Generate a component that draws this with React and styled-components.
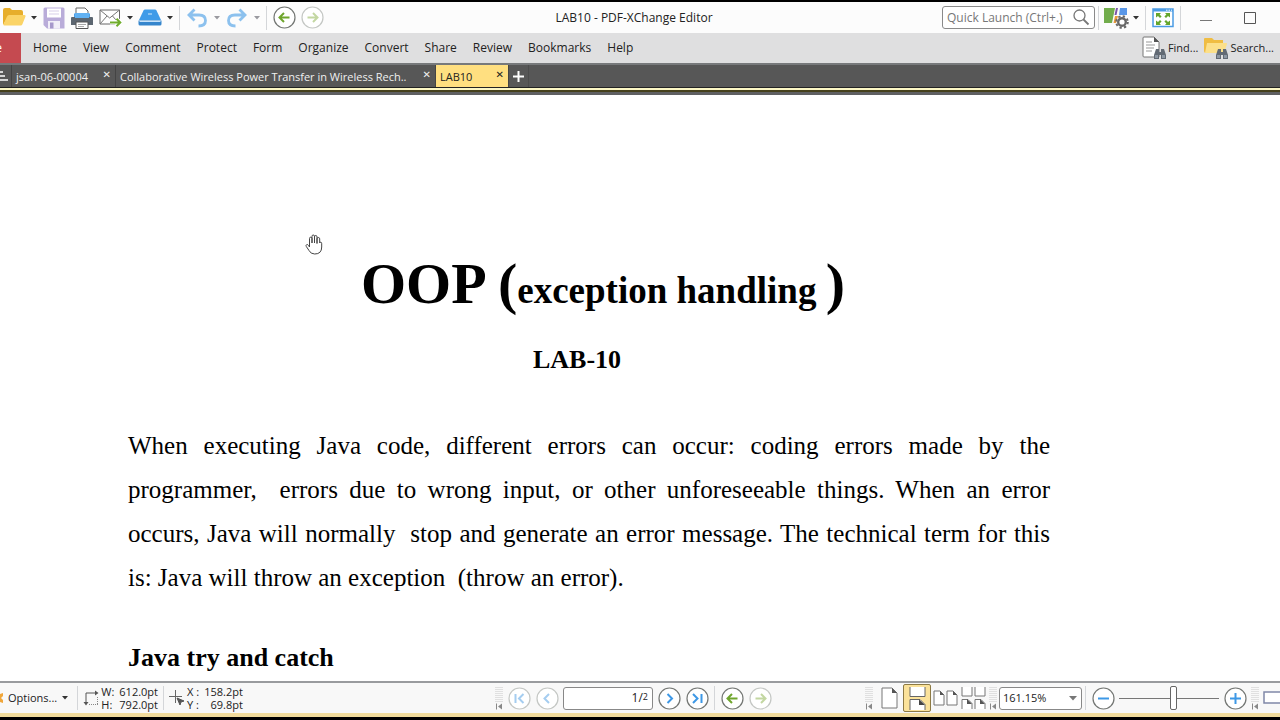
import React from 'react';
import styled, { createGlobalStyle } from 'styled-components';

const menuItems = [
  'Home',
  'View',
  'Comment',
  'Protect',
  'Form',
  'Organize',
  'Convert',
  'Share',
  'Review',
  'Bookmarks',
  'Help',
];

function Caret({ dim }) {
  return (
    <svg width="6" height="4" viewBox="0 0 6 4" aria-hidden="true">
      <path d="M0 0h6L3 3.5z" fill={dim ? '#9a9aa0' : '#333'} />
    </svg>
  );
}

function FolderIcon() {
  return (
    <svg width="24" height="22" viewBox="0 0 24 22">
      <path d="M1 3q0-2 2-2h5l2 2h9q2 0 2 2v5H6L1 18z" fill="#e7ae2b" />
      <path d="M7 8h15.500q1.500 0 1 1.500L20.500 17q-.5 1.500-2 1.500H2.500Q1 18.500 1.600 17L5 9.500Q5.600 8 7 8z" fill="#fbd467" />
    </svg>
  );
}

function SaveIcon() {
  return (
    <svg width="22" height="22" viewBox="0 0 22 22">
      <path d="M.5 2Q.5.5 2 .5h18q1.500 0 1.500 1.500v19.500H4L.5 18z" fill="#b9acd9" />
      <path d="M4 1.500h14v9H4z" fill="#fff" />
      <path d="M6 4h10M6 7h10" stroke="#d7cfe9" />
      <path d="M5 14h12v7.500H5z" fill="#f1eef8" />
      <path d="M7 15.500h3.500v6H7z" fill="#a698cb" />
    </svg>
  );
}

function PrintIcon() {
  return (
    <svg width="22" height="22" viewBox="0 0 22 22">
      <path d="M5 1h9l3 3v6H5z" fill="#fff" stroke="#666" />
      <path d="M3 6.500h16v5H3z" fill="#4b9fe6" />
      <path d="M1 10h20q1 0 1 1v7H0v-7q0-1 1-1z" fill="#5c6670" />
      <path d="M4 6h14v5H4z" fill="#61b1f2" />
      <path d="M5 15h12v6.500H5z" fill="#fff" stroke="#555" />
      <path d="M7 17.500h8M7 19.500h6" stroke="#aaa" />
    </svg>
  );
}

function MailIcon() {
  return (
    <svg width="23" height="20" viewBox="0 0 23 20">
      <path d="M1 2h19.500v14H1z" fill="#fff" stroke="#666" />
      <path d="M1 2l9.700 8L20.500 2M1 16l7-8M20.500 16l-7-8" fill="none" stroke="#777" />
      <path d="M11 14.500h10M17.500 10.800l3.800 3.700-3.800 3.700" fill="none" stroke="#fff" strokeWidth="4" />
      <path d="M11 14.500h10M17.500 10.800l3.800 3.700-3.800 3.700" fill="none" stroke="#70ad2b" strokeWidth="2" />
    </svg>
  );
}

function ScanIcon() {
  return (
    <svg width="24" height="18" viewBox="0 0 24 18">
      <path d="M5.500 1.500Q6 .5 7 .5h10q1 0 1.500 1L23 11H1z" fill="#3f9be8" />
      <path d="M.5 11.500h23V15q0 1.500-1.500 1.500H2Q.5 16.500.5 15z" fill="#3585cc" />
      <path d="M1.500 12.500h21" stroke="#c6e2fa" />
      <path d="M10 5h4" stroke="#d5eafb" />
    </svg>
  );
}

function UndoIcon({ flip }) {
  return (
    <svg width="20" height="20" viewBox="0 0 20 20">
      <path
        d="M7.500 1.500L2 7l5.500 5.500M2.500 7H12q6.500 0 6.500 5.500T11.500 18"
        fill="none"
        stroke="#8cc1ee"
        strokeWidth="2.800"
        transform={flip ? 'matrix(-1 0 0 1 20 0)' : undefined}
      />
    </svg>
  );
}

// round buttons used in the title bar and in the page navigation
const circleGlyphs = {
  back: 'M16.500 11.500H7M11 7l-4.500 4.500L11 16',
  forward: 'M6.500 11.500H16M12 7l4.500 4.500L12 16',
  first: 'M7.500 7v9M15.500 7L11 11.500l4.500 4.500',
  prev: 'M13 7l-4.500 4.500L13 16',
  next: 'M9.500 7l4.500 4.500L9.500 16',
  last: 'M7 7l4.500 4.500L7 16M15.500 7v9',
  minus: 'M6 11.500h11',
  plus: 'M6 11.500h11M11.500 6v11',
};

function CircleIcon({ glyph, color, dim }) {
  return (
    <svg width="23" height="23" viewBox="0 0 23 23">
      <circle cx="11.500" cy="11.500" r="10.500" fill="#fff" stroke={dim ? '#c4c7c4' : '#747774'} strokeWidth="1.200" />
      <path d={circleGlyphs[glyph]} fill="none" stroke={color} strokeWidth="2" />
    </svg>
  );
}

function ThemeIcon() {
  return (
    <svg width="25" height="22" viewBox="0 0 25 22">
      <path d="M0 1h11L8 16H0z" fill="#72ad4c" />
      <path d="M12 1h2l-1.500 7h-2z" fill="#7a55a8" />
      <path d="M16 1h7v7h-8z" fill="#5997e8" />
      <path d="M11 9h3l-2 7H9.500z" fill="#e99a3c" />
      <circle cx="18" cy="15" r="5.800" fill="none" stroke="#686868" strokeWidth="2" strokeDasharray="2.300 2.260" />
      <circle cx="18" cy="15" r="3.800" fill="#fff" stroke="#686868" strokeWidth="2.400" />
    </svg>
  );
}

function FullScreenIcon() {
  return (
    <svg width="22" height="20" viewBox="0 0 22 20">
      <path d="M1 1h20v17.500H1z" fill="#fff" stroke="#4a9be4" strokeWidth="1.500" />
      <path d="M1 1h20v2.500H1z" fill="#4a9be4" />
      <path d="M14 2.200h1.500M16.500 2.200H18M19 2.200h1" stroke="#fff" />
      <g fill="#65a62c">
        <path d="M4 5h5L7.600 6.400l2 2-1.600 1.600-2-2L4 9.500z" />
        <path d="M18 5h-5l1.400 1.400-2 2L14 10l2-2 2 1.500z" />
        <path d="M4 17h5l-1.400-1.400 2-2L8 12l-2 2-2-1.500z" />
        <path d="M18 17h-5l1.400-1.400-2-2L14 12l2 2 2-1.500z" />
      </g>
    </svg>
  );
}

function Binoculars() {
  return (
    <g fill="#626a74">
      <path d="M14 13h3v3h2v-3h3l2 6v4h-5v-4h-2v4h-5v-4z" />
      <path d="M13 19h3v3h-3zM20 19h3v3h-3z" fill="#8d97a3" />
    </g>
  );
}

function FindIcon() {
  return (
    <svg width="25" height="24" viewBox="0 0 25 24">
      <path d="M1 2q0-1 1-1h10l5 5v15H2q-1 0-1-1z" fill="#fff" stroke="#777" />
      <path d="M12 1v5h5z" fill="#555" />
      <path d="M4 6h6M4 9h9M4 12h8M4 15h6" stroke="#999" />
      <Binoculars />
    </svg>
  );
}

function SearchFolderIcon() {
  return (
    <svg width="25" height="24" viewBox="0 0 25 24">
      <path d="M0 3q0-1 1-1h7l2 2h9v13H2q-2 0-2-2z" fill="#f0bd42" />
      <path d="M3 7h19q1.500 0 1 1l-3 9H1z" fill="#fce08a" />
      <Binoculars />
    </svg>
  );
}

function HandCursor() {
  return (
    <svg width="18" height="21" viewBox="0 0 18 21">
      <path
        d="M4.500 11V4.500q0-1.300 1.200-1.300T7 4.500V9 2.300Q7 1 8.200 1t1.300 1.300V9 2.800q0-1.300 1.200-1.300T12 2.800V9.500 4.800q0-1.300 1.300-1.300t1.400 1.300V9q.3-1 1.200-.8t.8 1.500V13q0 7-7 7-4 0-5.700-3.500L1.300 12.500Q.6 11 1.700 10.600t1.800.9L4.500 13z"
        fill="#fff"
        stroke="#444"
        strokeLinejoin="round"
      />
    </svg>
  );
}

function SizeIcon() {
  return (
    <svg width="16" height="17" viewBox="0 0 16 17">
      <path d="M3 13V3h10" fill="none" stroke="#555" />
      <path d="M12 .5L15.500 3 12 5.500zM.5 12L3 15.500 5.500 12z" fill="#555" />
      <path d="M6 14.500h9M14.500 7v8" stroke="#888" strokeDasharray="1 1" />
    </svg>
  );
}

function PointerIcon() {
  return (
    <svg width="16" height="16" viewBox="0 0 16 16">
      <path d="M6.500 0v13M0 6.500h13" stroke="#666" />
      <path d="M8 8l7 3-3 1-1 3z" fill="#555" stroke="#555" />
    </svg>
  );
}

function Grip() {
  return (
    <GripBox>
      <svg width="8" height="24" viewBox="0 0 8 24" aria-hidden="true">
        <path d="M1 1v15M3 1v15M5 1v15M7 1v15" stroke="#c8c8c8" strokeDasharray="1 1" />
        <path d="M1.500 17.500v6" stroke="#888" />
        <path d="M7 17.500v6L3 20.500z" fill="#888" />
      </svg>
    </GripBox>
  );
}

function SinglePageIcon() {
  return (
    <svg width="17" height="22" viewBox="0 0 17 22">
      <path d="M1 1h10l5 5v15H1z" fill="#fff" stroke="#777" />
      <path d="M11 1v5h5z" fill="#555" />
    </svg>
  );
}

function ContinuousIcon() {
  return (
    <svg width="17" height="23" viewBox="0 0 17 23">
      <path d="M1 0v9.500h15V0M1 23V12.500h10l5 5V23" fill="#fff" stroke="#666" />
      <path d="M10 12.500v5.500h6z" fill="#444" />
    </svg>
  );
}

function TwoPagesIcon() {
  return (
    <svg width="25" height="17" viewBox="0 0 25 17">
      {[0, 13].map((x) => (
        <g key={x} transform={`translate(${x} 0)`}>
          <path d="M1 1h6l4 4v10H1z" fill="#fff" stroke="#777" />
          <path d="M7 1v4h4z" fill="#555" />
        </g>
      ))}
    </svg>
  );
}

function TwoContinuousIcon() {
  return (
    <svg width="25" height="22" viewBox="0 0 25 22">
      {[0, 13].map((x) => (
        <g key={x} transform={`translate(${x} 0)`}>
          <path d="M1 0v9h10V0M1 22V12.500h6l4 4V22" fill="#fff" stroke="#777" />
          <path d="M6 12v5h5z" fill="#555" />
        </g>
      ))}
    </svg>
  );
}

function App() {
  return (
    <Window>
      <GlobalStyle />
      <TitleBar>
        <QuickTools>
          <Tool $w={28} aria-label="Open"><FolderIcon /></Tool>
          <Tool $w={12} aria-label="Open options"><Caret /></Tool>
          <Tool $w={28} aria-label="Save"><SaveIcon /></Tool>
          <Tool $w={28} aria-label="Print"><PrintIcon /></Tool>
          <Tool $w={28} aria-label="Email"><MailIcon /></Tool>
          <Tool $w={12} aria-label="Email options"><Caret /></Tool>
          <Tool $w={28} aria-label="Scan"><ScanIcon /></Tool>
          <Tool $w={12} aria-label="Scan options"><Caret /></Tool>
          <Divider />
          <Tool $w={28} aria-label="Undo"><UndoIcon /></Tool>
          <Tool $w={12} aria-label="Undo options"><Caret dim /></Tool>
          <Tool $w={28} aria-label="Redo"><UndoIcon flip /></Tool>
          <Tool $w={12} aria-label="Redo options"><Caret dim /></Tool>
          <Divider />
          <Tool $w={28} aria-label="Previous view"><CircleIcon glyph="back" color="#6fa52d" /></Tool>
          <Tool $w={28} aria-label="Next view"><CircleIcon glyph="forward" color="#c3d7a2" dim /></Tool>
        </QuickTools>
        <Title>LAB10 - PDF-XChange Editor</Title>
        <WindowTools>
          <QuickLaunch>
            <input type="text" aria-label="Quick Launch" placeholder="Quick Launch (Ctrl+.)" />
            <svg width="17" height="17" viewBox="0 0 17 17">
              <circle cx="6.500" cy="6.500" r="5.500" fill="none" stroke="#777" strokeWidth="1.300" />
              <path d="M10.500 10.500l5 5" stroke="#777" strokeWidth="1.800" />
            </svg>
          </QuickLaunch>
          <Divider />
          <Tool $w={28} aria-label="Themes"><ThemeIcon /></Tool>
          <Tool $w={12} aria-label="Theme options"><Caret /></Tool>
          <Divider />
          <Tool $w={28} aria-label="Full screen"><FullScreenIcon /></Tool>
          <Divider />
          <Tool $w={44} aria-label="Minimize">
            <svg width="12" height="12" viewBox="0 0 12 12"><path d="M0 8.500h12" stroke="#777" /></svg>
          </Tool>
          <Tool $w={44} aria-label="Maximize">
            <svg width="12" height="12" viewBox="0 0 12 12"><path d="M.5.5h11v11H.5z" fill="none" stroke="#555" /></svg>
          </Tool>
        </WindowTools>
      </TitleBar>

      <MenuBar>
        <FileButton>File</FileButton>
        <MenuList>
          {menuItems.map((item) => (
            <MenuButton key={item}>{item}</MenuButton>
          ))}
        </MenuList>
        <SearchButton><FindIcon />Find...</SearchButton>
        <SearchButton><SearchFolderIcon />Search...</SearchButton>
      </MenuBar>

      <TabBar>
        <TabListButton aria-label="Tab list">
          <svg width="8" height="10" viewBox="0 0 8 10">
            <path d="M0 1h3M0 5h5M0 9h8" stroke="#fff" strokeWidth="1.500" />
          </svg>
        </TabListButton>
        <Tab $w={104}>
          <button>jsan-06-00004</button>
          <TabClose aria-label="Close jsan-06-00004">✕</TabClose>
        </Tab>
        <Tab $w={320}>
          <button>Collaborative Wireless Power Transfer in Wireless Rech..</button>
          <TabClose aria-label="Close Collaborative Wireless Power Transfer">✕</TabClose>
        </Tab>
        <Tab $w={73} $active>
          <button>LAB10</button>
          <TabClose aria-label="Close LAB10">✕</TabClose>
        </Tab>
        <NewTab aria-label="New tab">
          <svg width="11" height="11" viewBox="0 0 11 11">
            <path d="M5.500 0v11M0 5.500h11" stroke="#fff" strokeWidth="2" />
          </svg>
        </NewTab>
      </TabBar>
      <TabEdge />

      <Page>
        <Cursor><HandCursor /></Cursor>
        <Heading>
          OOP (<small>exception handling </small>)
        </Heading>
        <SubHeading>LAB-10</SubHeading>
        <Paragraph>
          When executing Java code, different errors can occur: coding errors made by the
          programmer,&nbsp; errors due to wrong input, or other unforeseeable things. When an error
          occurs, Java will normally&nbsp; stop and generate an error message. The technical term for this
          is: Java will throw an exception&nbsp; (throw an error).
        </Paragraph>
        <Section>Java try and catch</Section>
      </Page>

      <StatusBar>
        <StatusLeft>
          <OptionsButton>
            <svg width="3" height="12" viewBox="0 0 3 12">
              <path d="M0 2l3-1v3L1 6l2 2v3l-3-1z" fill="#f0a63a" />
            </svg>
            Options...
            <Caret />
          </OptionsButton>
          <Divider />
          <SizeIcon />
          <Readout>
            <dt>W:</dt><dd>612.0pt</dd>
            <dt>H:</dt><dd>792.0pt</dd>
          </Readout>
          <Divider />
          <PointerIcon />
          <Readout>
            <dt>X :</dt><dd>158.2pt</dd>
            <dt>Y :</dt><dd>69.8pt</dd>
          </Readout>
        </StatusLeft>
        <PageNav>
          <Grip />
          <Tool $w={28} aria-label="First page"><CircleIcon glyph="first" color="#a5cdf0" dim /></Tool>
          <Tool $w={28} aria-label="Previous page"><CircleIcon glyph="prev" color="#a5cdf0" dim /></Tool>
          <PageBox>
            <input type="text" aria-label="Page number" defaultValue="1" />
            <span>/</span>
            <sup>2</sup>
          </PageBox>
          <Tool $w={28} aria-label="Next page"><CircleIcon glyph="next" color="#3d98e6" /></Tool>
          <Tool $w={28} aria-label="Last page"><CircleIcon glyph="last" color="#3d98e6" /></Tool>
          <Divider />
          <Tool $w={28} aria-label="Back"><CircleIcon glyph="back" color="#6fa52d" /></Tool>
          <Tool $w={28} aria-label="Forward"><CircleIcon glyph="forward" color="#c3d7a2" dim /></Tool>
        </PageNav>
        <ViewTools>
          <Grip />
          <Tool $w={28} aria-label="Single page"><SinglePageIcon /></Tool>
          <Tool $w={28} $active aria-label="Continuous"><ContinuousIcon /></Tool>
          <Tool $w={28} aria-label="Two pages"><TwoPagesIcon /></Tool>
          <Tool $w={28} aria-label="Two pages continuous"><TwoContinuousIcon /></Tool>
          <Grip />
          <ZoomBox>
            <select aria-label="Zoom" defaultValue="161.15%">
              <option>161.15%</option>
            </select>
            <svg width="8" height="5" viewBox="0 0 8 5"><path d="M0 0h8L4 4.500z" fill="#777" /></svg>
          </ZoomBox>
          <Divider />
          <Tool $w={28} aria-label="Zoom out"><CircleIcon glyph="minus" color="#3d98e6" /></Tool>
          <ZoomSlider type="range" aria-label="Zoom level" min="0" max="100" defaultValue="55" />
          <Tool $w={28} aria-label="Zoom in"><CircleIcon glyph="plus" color="#3d98e6" /></Tool>
          <Grip />
          <LayoutButton aria-label="Page layout">
            <svg width="17" height="14" viewBox="0 0 17 14">
              <path d="M1 1h20v11H1z" fill="#fff" stroke="#8088a8" strokeWidth="1.500" />
            </svg>
          </LayoutButton>
        </ViewTools>
      </StatusBar>
    </Window>
  );
}

export default App;

const GlobalStyle = createGlobalStyle`
  * {
    box-sizing: border-box;
  }
  body {
    margin: 0;
    background: #000;
    overflow: hidden;
  }
  button, input, select {
    font: inherit;
    color: inherit;
    border: 0;
    padding: 0;
    background: none;
  }
  svg {
    display: block;
    flex: none;
  }
`;

const Window = styled.div`
  display: flex;
  flex-direction: column;
  height: 100vh;
  border-top: 2px solid #000;
  border-bottom: 3px solid #000;
  font-family: 'Open Sans', 'Noto Sans', sans-serif;
  font-size: 12px;
  line-height: 16px;
  color: #222;
  background: #fff;
`;

const TitleBar = styled.header`
  display: flex;
  flex: none;
  align-items: center;
  height: 31px;
  background: #fcfcfc;
`;

const QuickTools = styled.div`
  display: flex;
  align-items: center;
  flex: 0 0 326px;
`;

const Tool = styled.button`
  display: flex;
  flex: none;
  align-items: center;
  justify-content: center;
  width: ${(props) => props.$w}px;
  height: 28px;
  ${(props) =>
    props.$active &&
    `
    background: #fbe29a;
    border: 1px solid #8d7a45;
    border-radius: 2px;
  `}
`;

const Divider = styled.div`
  flex: none;
  width: 1px;
  height: 24px;
  margin: 0 3px;
  background: #d4d6d9;
`;

const Title = styled.div`
  flex: 1;
  text-align: center;
  white-space: nowrap;
`;

const WindowTools = styled.div`
  display: flex;
  align-items: center;
  flex: 0 0 338px;
`;

const QuickLaunch = styled.label`
  display: flex;
  align-items: center;
  width: 153px;
  height: 23px;
  padding: 0 4px;
  border: 1px solid #8a8a8a;
  border-radius: 3px;
  background: #fff;

  & input {
    flex: 1;
    min-width: 0;
  }
  & input::placeholder {
    color: #777;
    opacity: 1;
  }
`;

const MenuBar = styled.nav`
  display: flex;
  flex: none;
  align-items: center;
  height: 30px;
  background: #dfdfe0;
`;

const FileButton = styled.button`
  display: flex;
  align-items: center;
  justify-content: flex-end;
  flex: none;
  width: 21px;
  height: 30px;
  padding-right: 19px;
  overflow: hidden;
  color: #fff;
  background: #c54a50;
`;

const MenuList = styled.div`
  display: flex;
  flex: 1;
  gap: 16px;
  padding-left: 12px;
`;

const MenuButton = styled.button`
  white-space: nowrap;
`;

const SearchButton = styled.button`
  display: flex;
  align-items: center;
  gap: 1px;
  margin-right: 6px;
  font-size: 11px;
`;

const TabBar = styled.div`
  display: flex;
  flex: none;
  height: 24px;
  border-top: 2px solid #77797b;
  font-size: 11px;
  background: #575757;
`;

const TabListButton = styled.button`
  display: flex;
  align-items: center;
  width: 12px;
  border-right: 1px solid #444;
`;

const Tab = styled.div`
  display: flex;
  align-items: center;
  justify-content: space-between;
  width: ${(props) => props.$w}px;
  padding: 2px 4px 0 4px;
  border-right: 1px solid #444;
  white-space: nowrap;
  color: ${(props) => (props.$active ? '#222' : '#f0f0f0')};
  background: ${(props) => (props.$active ? '#ffdf80' : 'none')};
`;

const TabClose = styled.button`
  align-self: flex-start;
  font-family: 'DejaVu Sans', sans-serif;
  font-size: 10px;
`;

const NewTab = styled.button`
  display: flex;
  align-items: center;
  justify-content: center;
  width: 20px;
  border-right: 1px solid #4c4c4c;
`;

const TabEdge = styled.div`
  flex: none;
  height: 8px;
  border-top: 1px solid #222;
  border-bottom: 3px solid #5f6062;
  background: linear-gradient(#fbf6c4 0 2px, #45401c 2px 4px);
`;

const Page = styled.main`
  position: relative;
  flex: 1;
  min-height: 0;
  overflow: hidden;
  padding: 154px 32px 0 128px;
  font-family: 'Liberation Serif', serif;
  font-size: 25px;
  color: #000;
  background: #fff;
`;

const Cursor = styled.div`
  position: absolute;
  top: 139px;
  left: 305px;
`;

const Heading = styled.h1`
  max-width: 950px;
  margin: 0;
  font-size: 58px;
  line-height: 70px;
  text-align: center;

  & small {
    font-size: 37px;
  }
`;

const SubHeading = styled.h2`
  max-width: 898px;
  margin: 18px 0 0;
  font-size: 26px;
  line-height: 32px;
  text-align: center;
`;

const Paragraph = styled.p`
  max-width: 922px;
  margin: 48px 0 0;
  line-height: 44px;
  text-align: justify;
`;

const Section = styled.h3`
  margin: 42px 0 0;
  font-size: 26px;
  line-height: 32px;
`;

const StatusBar = styled.footer`
  display: flex;
  flex: none;
  align-items: center;
  height: 36px;
  border-top: 2px solid #999b9e;
  border-bottom: 4px solid #f2dc9c;
  font-size: 11px;
  background: #f8f8f8;
`;

const StatusLeft = styled.div`
  display: flex;
  align-items: center;
  gap: 2px;
  flex: 0 0 493px;
`;

const OptionsButton = styled.button`
  display: flex;
  align-items: center;
  gap: 5px;
  margin-right: 4px;
  white-space: nowrap;
`;

const Readout = styled.dl`
  display: grid;
  grid-template-columns: auto auto;
  column-gap: 5px;
  margin: 0;
  line-height: 13px;

  & dd {
    margin: 0;
    text-align: right;
  }
`;

const PageNav = styled.div`
  display: flex;
  align-items: center;
`;

const GripBox = styled.div`
  flex: none;
  margin: 0 2px;
`;

const PageBox = styled.label`
  display: flex;
  align-items: center;
  width: 90px;
  height: 23px;
  margin: 0 2px;
  padding: 0 4px;
  border: 1px solid #888;
  border-radius: 3px;
  font-size: 12px;
  background: #fff;

  & input {
    flex: 1;
    min-width: 0;
    text-align: right;
  }
  & sup {
    font-size: 9px;
    line-height: 16px;
    margin-bottom: 3px;
  }
`;

const ViewTools = styled.div`
  display: flex;
  align-items: center;
  flex: none;
  margin-left: auto;
`;

const ZoomBox = styled.label`
  display: flex;
  align-items: center;
  width: 83px;
  height: 23px;
  padding: 0 4px 0 3px;
  border: 1px solid #888;
  border-radius: 3px;
  background: #fff;

  & select {
    flex: 1;
    min-width: 0;
    appearance: none;
  }
`;

const ZoomSlider = styled.input`
  width: 100px;
  height: 24px;
  margin: 0 2px;
  appearance: none;
  background: linear-gradient(#777, #777) center / 100% 1px no-repeat;

  &::-webkit-slider-thumb {
    appearance: none;
    width: 7px;
    height: 24px;
    border: 1px solid #666;
    border-radius: 2px;
    background: #fff;
  }
`;

const LayoutButton = styled.button`
  margin-left: 2px;
`;
